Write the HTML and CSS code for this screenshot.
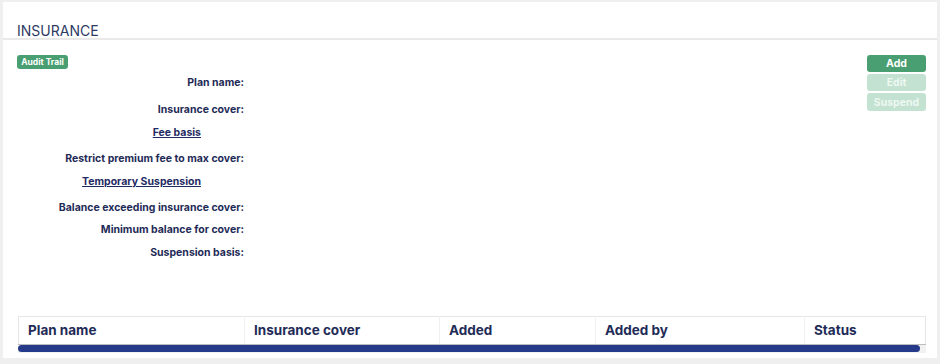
FILE: index.html
```html
<!DOCTYPE html>
<html>
    <head>
        <title>Insurance</title>
        <link rel="stylesheet" href="styles.css">
    </head>
    <body>
        <div class="panel">
            <div class="panel-header">INSURANCE</div>

            <div class="panel-body">
                <div class="top">
                    <div class="details">
                        <button type="button" class="btn btn-small">Audit Trail</button>

                        <div class="row first"><span class="label">Plan name:</span><span class="value"></span></div>
                        <div class="row"><span class="label">Insurance cover:</span><span class="value"></span></div>
                        <div class="row spaced link"><span class="label"><a href="#">Fee basis</a></span><span class="value"></span></div>
                        <div class="row"><span class="label">Restrict premium fee to max cover:</span><span class="value"></span></div>
                        <div class="row spaced link"><span class="label"><a href="#">Temporary Suspension</a></span><span class="value"></span></div>
                        <div class="row tight"><span class="label">Balance exceeding insurance cover:</span><span class="value"></span></div>
                        <div class="row"><span class="label">Minimum balance for cover:</span><span class="value"></span></div>
                        <div class="row"><span class="label">Suspension basis:</span><span class="value"></span></div>
                    </div>

                    <div class="actions">
                        <button type="button" class="btn">Add</button>
                        <button type="button" class="btn" disabled>Edit</button>
                        <button type="button" class="btn" disabled>Suspend</button>
                    </div>
                </div>

                <div class="grid-wrap">
                    <table class="grid">
                        <tr>
                            <th class="col-plan">Plan name</th>
                            <th class="col-cover">Insurance cover</th>
                            <th class="col-added">Added</th>
                            <th class="col-by">Added by</th>
                            <th>Status</th>
                        </tr>
                    </table>
                    <div class="scrollbar"><div class="thumb"></div></div>
                </div>
            </div>
        </div>
    </body>
</html>
```

FILE: styles.css
```css
body {
    margin: 0;
    background: #efefef;
    font-family: Inter, "Liberation Sans", sans-serif;
    color: #1f2b57;
}

.panel {
    margin: 2px 3px;
    height: 356px;
    background: #ffffff;
    box-sizing: border-box;
}

.panel-header {
    height: 38px;
    padding: 0 14px;
    display: flex;
    align-items: flex-end;
    box-sizing: border-box;
    font-size: 14px;
    line-height: 15px;
    color: #2d3a63;
    border-bottom: 2px solid #e9e9e9;
}

.panel-body {
    padding: 15px 11px 0 14px;
}

.top {
    display: flex;
    justify-content: space-between;
    height: 261px;
}

.details {
    width: 400px;
}

.btn {
    display: block;
    border: none;
    border-radius: 3px;
    background: #4a9f72;
    color: #ffffff;
    font-family: inherit;
    font-weight: bold;
    font-size: 10.5px;
    padding: 0;
    cursor: pointer;
}

.btn:disabled {
    background: #c3e2d1;
    color: #eef8f2;
}

.btn-small {
    width: 51px;
    height: 14px;
    font-size: 8.5px;
}

.row {
    display: flex;
    align-items: center;
    height: 18px;
    margin-bottom: 5px;
    font-size: 10.5px;
    font-weight: bold;
}

.row.first {
    margin-top: 4px;
    margin-bottom: 9px;
}

.row.spaced {
    margin-bottom: 8px;
}

.row.tight {
    margin-bottom: 4px;
}

.label {
    width: 227px;
    text-align: right;
}

.row.link .label {
    box-sizing: border-box;
    padding-right: 43px;
}

.label a {
    color: #1f2b63;
}

.actions {
    display: flex;
    flex-direction: column;
    gap: 2px;
    width: 59px;
}

.actions .btn {
    width: 59px;
    height: 17px;
}

.actions .btn:last-child {
    height: 18px;
}

.grid-wrap {
    margin-left: 1px;
    width: 908px;
}

.grid {
    width: 100%;
    table-layout: fixed;
    border-collapse: collapse;
    border: 1px solid #e6e6e6;
    border-bottom: none;
}

.grid th {
    box-sizing: border-box;
    height: 27px;
    padding: 0 9px;
    text-align: left;
    font-size: 13.5px;
    font-weight: bold;
    color: #1f2b57;
    border-right: 1px solid #f0f0f0;
}

.grid th:last-child {
    border-right: none;
}

.col-plan {
    width: 226px;
}

.col-cover {
    width: 195px;
}

.col-added {
    width: 156px;
}

.col-by {
    width: 209px;
}

.scrollbar {
    height: 8px;
    background: #f1f1f1;
    border-top: 1px solid #bdbdbd;
}

.thumb {
    height: 7px;
    margin-right: 6px;
    border-radius: 4px;
    background: #263a8c;
}
```
